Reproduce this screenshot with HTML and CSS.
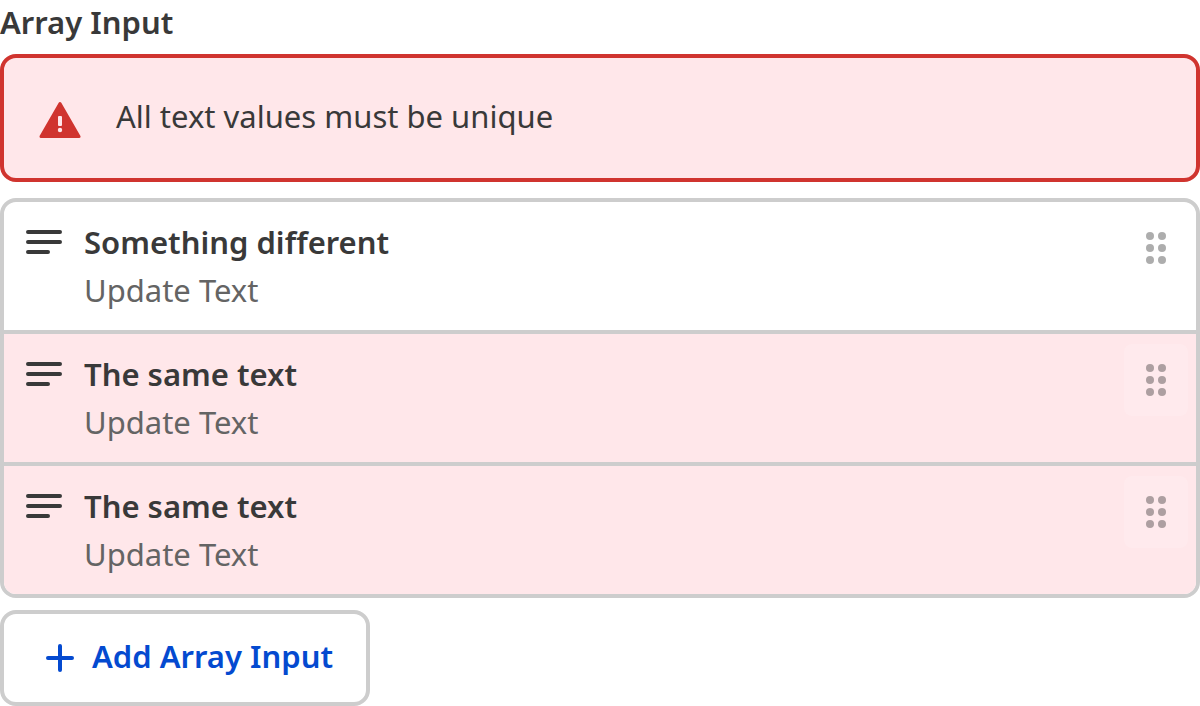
FILE: index.html
```html
<!DOCTYPE html>
<html lang="en">
	<head>
		<meta charset="utf-8">
		<title>Array Input</title>
		<link rel="stylesheet" href="styles.css">
	</head>
	<body>
		<div class="label">Array Input</div>
		<div class="error">
			<svg class="errorIcon" width="42" height="38" viewBox="0 0 42 38">
				<path d="M21 2.500 L40 35.500 H2 Z" fill="#d0342f" stroke="#d0342f" stroke-width="3" stroke-linejoin="round"/>
				<rect x="19" y="15" width="4" height="10" rx="1" fill="#ffe7ea"/>
				<circle cx="21" cy="29" r="2.200" fill="#ffe7ea"/>
			</svg>
			<span>All text values must be unique</span>
		</div>
		<div class="list">
			<div class="item">
				<svg class="textIcon" width="36" height="24" viewBox="0 0 36 24">
					<path d="M2 2 H34 M2 12 H34 M2 22 H22"/>
				</svg>
				<div class="itemText">
					<div class="title">Something different</div>
					<div class="subtitle">Update Text</div>
				</div>
				<div class="handle">
					<svg width="20" height="32" viewBox="0 0 20 32">
						<circle cx="4" cy="4" r="4"/><circle cx="16" cy="4" r="4"/>
						<circle cx="4" cy="16" r="4"/><circle cx="16" cy="16" r="4"/>
						<circle cx="4" cy="28" r="4"/><circle cx="16" cy="28" r="4"/>
					</svg>
				</div>
			</div>
			<div class="item invalid">
				<svg class="textIcon" width="36" height="24" viewBox="0 0 36 24">
					<path d="M2 2 H34 M2 12 H34 M2 22 H22"/>
				</svg>
				<div class="itemText">
					<div class="title">The same text</div>
					<div class="subtitle">Update Text</div>
				</div>
				<div class="handle">
					<svg width="20" height="32" viewBox="0 0 20 32">
						<circle cx="4" cy="4" r="4"/><circle cx="16" cy="4" r="4"/>
						<circle cx="4" cy="16" r="4"/><circle cx="16" cy="16" r="4"/>
						<circle cx="4" cy="28" r="4"/><circle cx="16" cy="28" r="4"/>
					</svg>
				</div>
			</div>
			<div class="item invalid">
				<svg class="textIcon" width="36" height="24" viewBox="0 0 36 24">
					<path d="M2 2 H34 M2 12 H34 M2 22 H22"/>
				</svg>
				<div class="itemText">
					<div class="title">The same text</div>
					<div class="subtitle">Update Text</div>
				</div>
				<div class="handle">
					<svg width="20" height="32" viewBox="0 0 20 32">
						<circle cx="4" cy="4" r="4"/><circle cx="16" cy="4" r="4"/>
						<circle cx="4" cy="16" r="4"/><circle cx="16" cy="16" r="4"/>
						<circle cx="4" cy="28" r="4"/><circle cx="16" cy="28" r="4"/>
					</svg>
				</div>
			</div>
		</div>
		<button class="addButton" type="button">
			<svg width="28" height="28" viewBox="0 0 28 28">
				<path d="M14 2 V26 M2 14 H26"/>
			</svg>
			<span>Add Array Input</span>
		</button>
	</body>
</html>
```
FILE: styles.css
```css
* {
	box-sizing: border-box;
}

body {
	margin: 0;
	background: #fff;
	color: #393939;
	font-family: "Noto Sans", sans-serif;
	font-size: 31px;
	line-height: 48px;
	font-variant-ligatures: none;
}

svg {
	display: block;
	flex: none;
}

.label {
	height: 54px;
	line-height: 44px;
	font-weight: 600;
}

.error {
	display: flex;
	align-items: flex-start;
	height: 128px;
	padding: 34px 35px;
	border: 4px solid #d0342f;
	border-radius: 16px;
	background: #ffe7ea;
}

.errorIcon {
	margin: 9px 35px 0 0;
}

.list {
	margin: 16px 0 12px;
	border: 4px solid #cdcdcd;
	border-radius: 16px;
	overflow: hidden;
}

.item {
	display: flex;
	align-items: flex-start;
	height: 132px;
	padding: 10px 8px 0 22px;
	border-bottom: 4px solid #cdcdcd;
}

.item:last-child {
	height: 128px;
	border-bottom: 0;
}

.invalid {
	background: #ffe7ea;
}

.textIcon {
	margin: 18px 22px 0 0;
	fill: none;
	stroke: #393939;
	stroke-width: 4;
	stroke-linecap: round;
}

.itemText {
	flex: 1;
	padding-top: 6px;
}

.title {
	font-weight: 600;
}

.subtitle {
	color: #646464;
}

.handle {
	display: flex;
	align-items: center;
	justify-content: center;
	width: 64px;
	height: 72px;
	border-radius: 8px;
	background: rgba(255, 255, 255, 0.15);
	fill: rgba(0, 0, 0, 0.32);
}

.addButton {
	display: flex;
	align-items: center;
	width: 370px;
	height: 96px;
	padding: 0 0 4px 42px;
	border: 4px solid #cdcdcd;
	border-radius: 16px;
	background: #fff;
	color: #044ad0;
	font: inherit;
	font-weight: 600;
}

.addButton svg {
	margin: 4px 18px 0 0;
	fill: none;
	stroke: #044ad0;
	stroke-width: 4;
	stroke-linecap: round;
}
```
